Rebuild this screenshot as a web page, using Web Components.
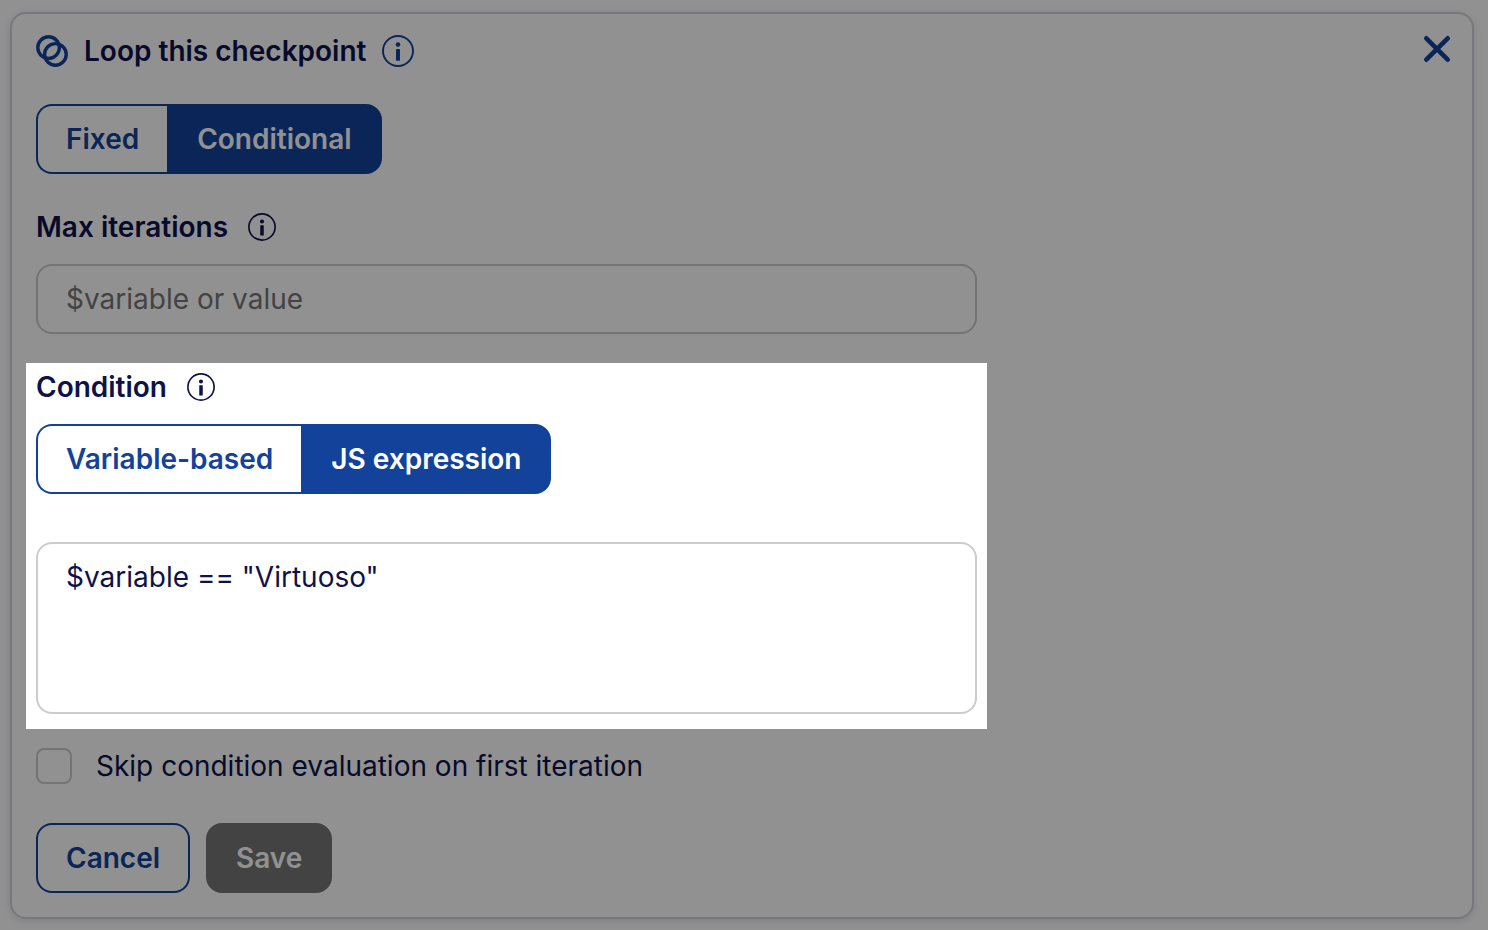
<!DOCTYPE html>
<html lang="en">
<head>
<meta charset="UTF-8">
<meta name="viewport" content="width=device-width, initial-scale=1">
<title>Loop this checkpoint</title>
<style>
    :root {
        --blue: #13429a;
        --navy: #0e124a;
        --grey: #777;
        --line: #ccc;
        --radius: 16px;
    }

    body {
        margin: 0;
        padding: 12px 14px 11px 10px;
        background: #fff;
        color: var(--navy);
        font: 400 28px/34px Inter, sans-serif;
    }
</style>
</head>
<body>
<loop-dialog>
    <span slot="title">Loop this checkpoint</span>
    <button-switch selected="1" options="Fixed|Conditional" name="Loop type"></button-switch>
    <text-field placeholder="$variable or value">Max iterations</text-field>
    <condition-field>
        Condition
        <button-switch slot="mode" selected="1" options="Variable-based|JS expression" name="Condition type"></button-switch>
    </condition-field>
    <check-field>Skip condition evaluation on first iteration</check-field>
    <action-button slot="actions">Cancel</action-button>
    <action-button slot="actions" disabled>Save</action-button>
</loop-dialog>

<script>
    class InfoIcon extends HTMLElement {
        constructor() {
            super();
            this.attachShadow({ mode: 'open' });
            this.shadowRoot.innerHTML = `
            <style>
                :host {
                    display: block;
                    width: 28px;
                    height: 28px;
                }

                :host([large]) {
                    width: 32px;
                    height: 32px;
                    color: var(--blue);
                }

                svg {
                    display: block;
                    width: 100%;
                    height: 100%;
                }
            </style>
            <svg viewBox="0 0 32 32" aria-hidden="true">
                <circle cx="16" cy="16" r="15" fill="none" stroke="currentColor" stroke-width="1.9"/>
                <circle cx="16" cy="9.6" r="2.3" fill="currentColor"/>
                <rect x="14" y="14" width="4" height="11.7" rx=".4" fill="currentColor"/>
            </svg>
            `;
        }
    }

    class ButtonSwitch extends HTMLElement {
        constructor() {
            super();
            this.attachShadow({ mode: 'open' });
            this.shadowRoot.innerHTML = `
            <style>
                :host {
                    display: flex;
                }

                .group {
                    display: flex;
                }

                button {
                    box-sizing: border-box;
                    height: 70px;
                    padding: 0 28px;
                    border: 2px solid var(--blue);
                    background: #fff;
                    color: var(--blue);
                    font: inherit;
                    font-weight: 600;
                    cursor: pointer;
                }

                button:first-child {
                    border-right: 0;
                    border-radius: var(--radius) 0 0 var(--radius);
                }

                button:last-child {
                    border-radius: 0 var(--radius) var(--radius) 0;
                }

                button[aria-pressed="true"] {
                    background: var(--blue);
                    color: #fff;
                }
            </style>
            <div class="group" role="group"></div>
            `;
        }

        connectedCallback() {
            const group = this.shadowRoot.querySelector('.group');
            group.setAttribute('aria-label', this.getAttribute('name'));
            this.getAttribute('options').split('|').forEach((text, index) => {
                const button = document.createElement('button');
                button.type = 'button';
                button.textContent = text;
                button.addEventListener('click', () => this.select(index));
                group.append(button);
            });
            this.select(Number(this.getAttribute('selected')));
        }

        select(selected) {
            this.shadowRoot.querySelectorAll('button').forEach((button, index) => {
                button.setAttribute('aria-pressed', index === selected);
            });
        }
    }

    class TextField extends HTMLElement {
        constructor() {
            super();
            this.attachShadow({ mode: 'open' });
            this.shadowRoot.innerHTML = `
            <style>
                :host {
                    display: block;
                    width: calc(100% * 2 / 3);
                    margin-top: 36px;
                }

                .label {
                    display: flex;
                    align-items: center;
                    gap: 20px;
                    margin-bottom: 20px;
                    font-weight: 600;
                }

                input {
                    display: block;
                    box-sizing: border-box;
                    width: 100%;
                    height: 70px;
                    padding: 0 28px;
                    border: 2px solid var(--line);
                    border-radius: var(--radius);
                    background: #fff;
                    color: inherit;
                    font: inherit;
                }

                input::placeholder {
                    color: var(--grey);
                }
            </style>
            <div class="label"><label for="value"><slot></slot></label><info-icon></info-icon></div>
            <input id="value" type="text">
            `;
        }

        connectedCallback() {
            this.shadowRoot.querySelector('input').placeholder = this.getAttribute('placeholder');
        }
    }

    class ConditionField extends HTMLElement {
        constructor() {
            super();
            this.attachShadow({ mode: 'open' });
            this.shadowRoot.innerHTML = `
            <style>
                /* the shadow dims everything around this block */
                :host {
                    display: block;
                    position: relative;
                    z-index: 1;
                    width: calc(100% * 2 / 3);
                    margin: 29px -10px 19px;
                    padding: 7px 10px 15px;
                    background: #fff;
                    box-shadow: 0 0 0 4000px rgba(0, 0, 0, .43);
                }

                .label {
                    display: flex;
                    align-items: center;
                    gap: 20px;
                    margin-bottom: 20px;
                    font-weight: 600;
                }

                textarea {
                    display: block;
                    box-sizing: border-box;
                    width: 100%;
                    height: 172px;
                    margin: 48px 0 0;
                    padding: 16px 28px;
                    border: 2px solid var(--line);
                    border-radius: var(--radius);
                    background: #fff;
                    color: inherit;
                    font: inherit;
                    resize: none;
                }
            </style>
            <div class="label"><label for="expression"><slot></slot></label><info-icon></info-icon></div>
            <slot name="mode"></slot>
            <textarea id="expression" spellcheck="false">$variable == "Virtuoso"</textarea>
            `;
        }
    }

    class CheckField extends HTMLElement {
        constructor() {
            super();
            this.attachShadow({ mode: 'open' });
            this.shadowRoot.innerHTML = `
            <style>
                :host {
                    display: flex;
                }

                label {
                    display: flex;
                    align-items: center;
                    gap: 24px;
                }

                input {
                    appearance: none;
                    flex: none;
                    box-sizing: border-box;
                    width: 36px;
                    height: 36px;
                    margin: 0;
                    border: 2px solid var(--line);
                    border-radius: 8px;
                    background: #fff;
                }

                input:checked {
                    border-color: var(--blue);
                    background: var(--blue);
                }
            </style>
            <label><input type="checkbox"><span><slot></slot></span></label>
            `;
        }
    }

    class ActionButton extends HTMLElement {
        constructor() {
            super();
            this.attachShadow({ mode: 'open' });
            this.shadowRoot.innerHTML = `
            <style>
                :host {
                    display: block;
                }

                button {
                    box-sizing: border-box;
                    height: 70px;
                    padding: 0 28px;
                    border: 2px solid var(--blue);
                    border-radius: var(--radius);
                    background: #fff;
                    color: var(--blue);
                    font: inherit;
                    font-weight: 600;
                }

                button:disabled {
                    border-color: var(--grey);
                    background: var(--grey);
                    color: #fff;
                }
            </style>
            <button type="button"><slot></slot></button>
            `;
        }

        connectedCallback() {
            this.shadowRoot.querySelector('button').disabled = this.hasAttribute('disabled');
        }
    }

    class LoopDialog extends HTMLElement {
        constructor() {
            super();
            this.attachShadow({ mode: 'open' });
            this.shadowRoot.innerHTML = `
            <style>
                :host {
                    display: block;
                    padding: 21px 24px 24px;
                    border: 2px solid #d2d2de;
                    border-radius: var(--radius);
                    background: #fff;
                    box-shadow: 0 2px 8px rgba(0, 0, 0, .12);
                }

                header {
                    display: flex;
                    align-items: center;
                    gap: 16px;
                    height: 32px;
                    margin: 0 -3px 37px 0;
                }

                h1 {
                    margin: 0;
                    font-size: 28px;
                    font-weight: 600;
                }

                svg {
                    display: block;
                    fill: none;
                    stroke: var(--blue);
                }

                .close {
                    align-self: flex-start;
                    margin: 0 0 0 auto;
                    padding: 0;
                    border: 0;
                    background: none;
                    cursor: pointer;
                }

                footer {
                    display: flex;
                    gap: 16px;
                    margin-top: 39px;
                }
            </style>
            <header>
                <svg width="32" height="32" viewBox="0 0 32 32" stroke-width="3.4" aria-hidden="true">
                    <circle cx="12.6" cy="12.6" r="10.8"/>
                    <circle cx="19.4" cy="19.4" r="10.8"/>
                </svg>
                <h1><slot name="title"></slot></h1>
                <info-icon large></info-icon>
                <button class="close" type="button" aria-label="Close">
                    <svg width="28" height="28" viewBox="0 0 28 28" stroke-width="4.6" stroke-linecap="round">
                        <path d="M3.3 3.3 24.7 24.7M24.7 3.3 3.3 24.7"/>
                    </svg>
                </button>
            </header>
            <slot></slot>
            <footer><slot name="actions"></slot></footer>
            `;
        }
    }

    customElements.define('info-icon', InfoIcon);
    customElements.define('button-switch', ButtonSwitch);
    customElements.define('text-field', TextField);
    customElements.define('condition-field', ConditionField);
    customElements.define('check-field', CheckField);
    customElements.define('action-button', ActionButton);
    customElements.define('loop-dialog', LoopDialog);
</script>
</body>
</html>
